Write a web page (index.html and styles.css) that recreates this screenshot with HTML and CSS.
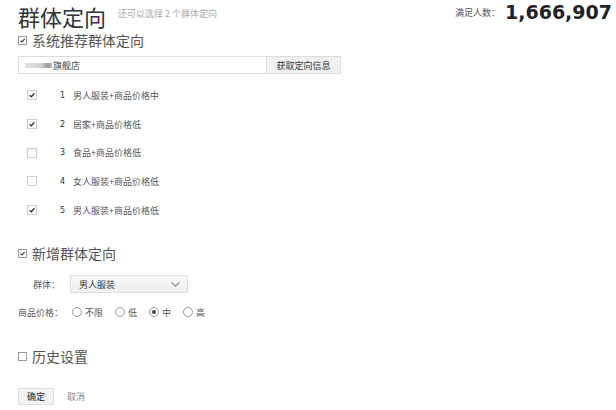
FILE: index.html
```html
<!DOCTYPE html>
<html lang="zh-CN">
<head>
  <meta charset="UTF-8" />
  <title>群体定向</title>
  <link rel="stylesheet" href="styles.css">
</head>
<body>
  <div class="page">
    <div class="header">
      <h1 class="title">群体定向</h1>
      <span class="hint">还可以选择 2 个群体定向</span>
      <div class="total">
        <span class="total-label">满足人数：</span>
        <span class="total-num">1,666,907</span>
      </div>
    </div>

    <div class="section-head">
      <span class="box checked"><svg viewBox="0 0 10 10"><path d="M2 5.2 L4.2 7.2 L8 2.8" /></svg></span>
      系统推荐群体定向
    </div>

    <div class="search-row">
      <div class="shop-input"><span class="blur"></span>旗舰店</div>
      <button class="get-btn">获取定向信息</button>
    </div>

    <ul class="group-list">
      <li><span class="box small checked"><svg viewBox="0 0 10 10"><path d="M2 5.2 L4.2 7.2 L8 2.8" /></svg></span><span class="num">1</span>男人服装+商品价格中</li>
      <li><span class="box small checked"><svg viewBox="0 0 10 10"><path d="M2 5.2 L4.2 7.2 L8 2.8" /></svg></span><span class="num">2</span>居家+商品价格低</li>
      <li><span class="box small"></span><span class="num">3</span>食品+商品价格低</li>
      <li><span class="box small"></span><span class="num">4</span>女人服装+商品价格低</li>
      <li><span class="box small checked"><svg viewBox="0 0 10 10"><path d="M2 5.2 L4.2 7.2 L8 2.8" /></svg></span><span class="num">5</span>男人服装+商品价格低</li>
    </ul>

    <div class="section-head new-head">
      <span class="box checked"><svg viewBox="0 0 10 10"><path d="M2 5.2 L4.2 7.2 L8 2.8" /></svg></span>
      新增群体定向
    </div>

    <div class="field-row group-row">
      <span class="field-label">群体：</span>
      <div class="select">
        男人服装
        <svg class="chevron" viewBox="0 0 12 8"><path d="M1.5 1.5 L6 6 L10.5 1.5" /></svg>
      </div>
    </div>

    <div class="field-row price-row">
      <span class="field-label">商品价格：</span>
      <span class="radio"></span><span class="radio-text">不限</span>
      <span class="radio"></span><span class="radio-text">低</span>
      <span class="radio on"></span><span class="radio-text">中</span>
      <span class="radio"></span><span class="radio-text">高</span>
    </div>

    <div class="section-head history-head">
      <span class="box"></span>
      历史设置
    </div>

    <div class="actions">
      <button class="ok-btn">确定</button>
      <span class="cancel">取消</span>
    </div>
  </div>
</body>
</html>
```

FILE: styles.css
```css
* {
  box-sizing: border-box;
}

body {
  margin: 0;
  background: #ffffff;
  font-family: "Noto Sans CJK SC", "DejaVu Sans", sans-serif;
  color: #444;
}

.page {
  padding: 0 4px 0 18px;
}

.header {
  display: flex;
  align-items: flex-start;
  height: 31px;
}

.title {
  margin: 0;
  font-size: 22px;
  line-height: normal;
  font-weight: normal;
  color: #333;
}

.hint {
  margin: 7px 0 0 12px;
  font-size: 9px;
  line-height: 14px;
  color: #aaa;
}

.total {
  margin-left: auto;
  display: flex;
  align-items: center;
  height: 24px;
}

.total-label {
  font-size: 9px;
  color: #555;
  margin-right: 5px;
}

.total-num {
  font-family: "DejaVu Sans", sans-serif;
  font-weight: bold;
  font-size: 19px;
  color: #222;
}

.section-head {
  display: flex;
  align-items: center;
  height: 18px;
  font-size: 14px;
  color: #555;
}

.box {
  display: inline-block;
  width: 9px;
  height: 9px;
  border: 1px solid #9a9a9a;
  background: #fff;
  margin-right: 5px;
  flex: none;
}

.box svg {
  display: block;
  width: 100%;
  height: 100%;
  fill: none;
  stroke: #333;
  stroke-width: 1.6;
}

.search-row {
  display: flex;
  margin-top: 7px;
  height: 18px;
}

.shop-input {
  width: 249px;
  border: 1px solid #ddd;
  font-size: 9px;
  display: flex;
  align-items: center;
  padding-left: 6px;
  color: #444;
}

.blur {
  display: inline-block;
  width: 27px;
  height: 5px;
  background: linear-gradient(90deg, #e4e4e4, #cfcfcf 60%, #999 85%, #bbb);
  margin-right: 1px;
}

.get-btn {
  width: 74px;
  border: 1px solid #ddd;
  border-left: none;
  background: #f1f1f1;
  font-family: "Noto Sans CJK SC", sans-serif;
  font-size: 9px;
  color: #333;
  padding: 0;
}

.group-list {
  list-style: none;
  margin: 7px 0 0;
  padding: 0;
}

.group-list li {
  display: flex;
  align-items: center;
  height: 28.7px;
  font-size: 9px;
  color: #555;
}

.box.small {
  width: 10px;
  height: 10px;
  border-color: #ccc;
  margin: 0 0 0 9px;
}

.num {
  margin-left: 23px;
  width: 13px;
  font-family: "DejaVu Sans", sans-serif;
  font-size: 8px;
  color: #333;
}

.new-head {
  margin-top: 20px;
}

.field-row {
  display: flex;
  align-items: center;
  font-size: 9px;
  color: #555;
}

.group-row {
  margin-top: 13px;
  padding-left: 15px;
  height: 18px;
}

.group-row .field-label {
  width: 37px;
}

.select {
  width: 118px;
  height: 18px;
  border: 1px solid #ddd;
  background: linear-gradient(#fafafa, #eeeeee);
  display: flex;
  align-items: center;
  padding-left: 8px;
  color: #333;
}

.chevron {
  margin-left: auto;
  margin-right: 6px;
  width: 11px;
  height: 7px;
  fill: none;
  stroke: #888;
  stroke-width: 1.3;
}

.price-row {
  margin-top: 12px;
  height: 14px;
}

.price-row .field-label {
  width: 54px;
}

.radio {
  width: 10px;
  height: 10px;
  border: 1px solid #999;
  border-radius: 50%;
  margin-right: 3px;
  display: flex;
  align-items: center;
  justify-content: center;
}

.radio.on::after {
  content: "";
  width: 4px;
  height: 4px;
  border-radius: 50%;
  background: #444;
}

.radio-text {
  margin-right: 12px;
}

.history-head {
  margin-top: 28px;
}

.actions {
  display: flex;
  align-items: center;
  margin-top: 23px;
  font-size: 9px;
}

.ok-btn {
  width: 36px;
  height: 17px;
  border: 1px solid #ddd;
  background: #f3f3f3;
  font-family: "Noto Sans CJK SC", sans-serif;
  font-size: 9px;
  color: #222;
  padding: 0;
}

.cancel {
  margin-left: 13px;
  color: #888;
}
```
